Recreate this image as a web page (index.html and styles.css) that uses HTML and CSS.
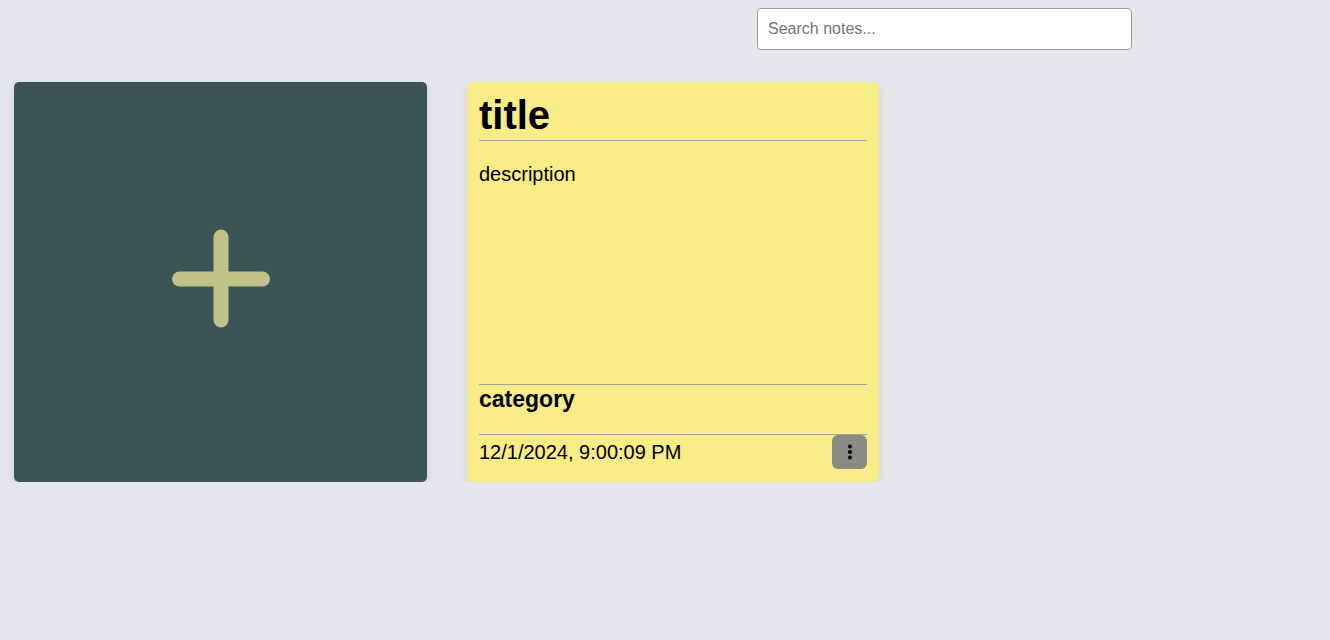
FILE: index.html
```html
<!DOCTYPE html>
<html lang="en">
<head>
<meta charset="utf-8">
<title>Notes</title>
<link rel="stylesheet" href="styles.css">
</head>
<body>
<header class="topbar">
  <input class="search" type="text" placeholder="Search notes...">
</header>
<main class="notes">
  <button class="add-card" aria-label="Add note">
    <svg class="plus" width="100" height="100" viewBox="0 0 100 100" aria-hidden="true">
      <line x1="50" y1="8" x2="50" y2="91" stroke="#bfc387" stroke-width="15" stroke-linecap="round"/>
      <line x1="8.5" y1="50" x2="91.5" y2="50" stroke="#bfc387" stroke-width="15" stroke-linecap="round"/>
    </svg>
  </button>
  <article class="note">
    <h1 class="note-title">title</h1>
    <p class="note-desc">description</p>
    <div class="note-cat">category</div>
    <div class="note-foot">
      <span class="note-date">12/1/2024, 9:00:09 PM</span>
      <button class="menu-btn" aria-label="More">
        <svg width="6" height="16" viewBox="0 0 6 16" aria-hidden="true">
          <circle cx="3" cy="2.5" r="2" fill="#000"/>
          <circle cx="3" cy="8" r="2" fill="#000"/>
          <circle cx="3" cy="13.5" r="2" fill="#000"/>
        </svg>
      </button>
    </div>
  </article>
</main>
</body>
</html>
```

FILE: styles.css
```css
* { box-sizing: border-box; }
html, body {
  margin: 0;
  padding: 0;
  background: #e6e7ec;
  font-family: "Liberation Sans", Arial, sans-serif;
}
.topbar {
  display: flex;
  padding: 8px 0 0 757px;
  height: 82px;
}
.search {
  width: 375px;
  height: 42px;
  border: 1px solid #9a9a9e;
  border-radius: 4px;
  background: #fff;
  padding: 0 10px;
  font-family: "Liberation Sans", Arial, sans-serif;
  font-size: 16px;
  color: #222;
  outline: none;
}
.search::placeholder { color: #757575; }
.notes {
  display: flex;
  gap: 40px;
  padding-left: 14px;
}
.add-card {
  width: 413px;
  height: 400px;
  background: #3b5556;
  border: none;
  border-radius: 5px;
  box-shadow: 0 3px 8px rgba(0,0,0,0.1);
  display: flex;
  align-items: center;
  justify-content: center;
  padding: 0 0 7px 0;
  cursor: pointer;
}
.note {
  width: 412px;
  height: 400px;
  background: #f7ec86;
  border-radius: 6px;
  box-shadow: 0 3px 8px rgba(0,0,0,0.1);
  padding: 10px 12px 13px;
  display: flex;
  flex-direction: column;
}
.note-title {
  margin: 0;
  font-size: 40px;
  line-height: 46px;
  font-weight: bold;
  padding-bottom: 2px;
  border-bottom: 1px solid #a3a39c;
}
.note-desc {
  margin: 0;
  flex: 1;
  padding-top: 22px;
  font-size: 20px;
  line-height: 23px;
}
.note-cat {
  border-top: 1px solid #a3a39c;
  padding-top: 1px;
  height: 50px;
  font-size: 23px;
  line-height: 26px;
  font-weight: bold;
}
.note-foot {
  border-top: 1px solid #a3a39c;
  display: flex;
  align-items: center;
  justify-content: space-between;
  height: 35px;
}
.note-date {
  font-size: 20px;
  line-height: 23px;
}
.menu-btn {
  width: 35px;
  height: 34px;
  border: none;
  border-radius: 6px;
  background: #8a8985;
  display: flex;
  align-items: center;
  justify-content: center;
  padding: 0;
  cursor: pointer;
}
```
